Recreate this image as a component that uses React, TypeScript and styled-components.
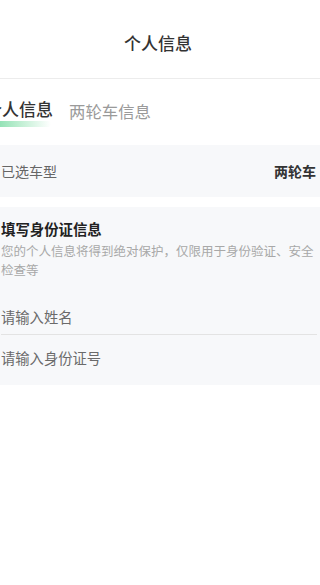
import React from "react";
import styled, { createGlobalStyle } from "styled-components";

const GlobalStyle = createGlobalStyle`
  html, body {
    margin: 0;
    padding: 0;
    background: #ffffff;
    overflow: hidden;
  }
  body {
    font-family: "Noto Sans CJK SC", "Noto Sans", sans-serif;
    color: #333333;
  }
  * { box-sizing: border-box; }
`;

const Page = styled.div`
  width: 320px;
  height: 585px;
  overflow: hidden;
  background: #ffffff;
  display: flex;
  flex-direction: column;
`;

const Header = styled.header`
  height: 79px;
  flex: none;
  display: flex;
  align-items: center;
  justify-content: center;
  padding: 8px 4px 0 0;
  border-bottom: 1px solid #ececec;
`;

const Title = styled.h1`
  margin: 0;
  font-size: 17px;
  line-height: 24px;
  font-weight: 500;
  color: #333333;
`;

const Tabs = styled.nav`
  display: flex;
  align-items: flex-start;
  gap: 16px;
  margin-left: -15px;
  padding-top: 18px;
`;

const Tab = styled.div<{ $active?: boolean }>`
  display: flex;
  flex-direction: column;
  font-size: ${(p) => (p.$active ? "17px" : "16.4px")};
  line-height: 24px;
  font-weight: ${(p) => (p.$active ? 500 : 400)};
  color: ${(p) => (p.$active ? "#333333" : "#9a9a9a")};
  padding-top: ${(p) => (p.$active ? "0" : "2px")};
`;

const TabBar = styled.span`
  display: block;
  height: 6px;
  width: 66px;
  border-radius: 3px;
  background: linear-gradient(
    90deg,
    rgba(70, 205, 130, 0.75) 0%,
    rgba(120, 220, 160, 0.45) 55%,
    rgba(160, 230, 190, 0) 100%
  );
`;

const Card = styled.section`
  background: #f7f8fa;
  padding: 0 3px 0 1px;
`;

const TypeCard = styled(Card)`
  margin-top: 18px;
  height: 52px;
  display: flex;
  align-items: center;
  justify-content: space-between;
  padding: 0 4px 0 1px;
`;

const Label = styled.span`
  font-size: 14px;
  line-height: 20px;
  color: #666666;
`;

const Value = styled.span`
  font-size: 14px;
  line-height: 20px;
  font-weight: 700;
  color: #333333;
`;

const IdCard = styled(Card)`
  margin-top: 10px;
  padding-top: 12px;
  padding-bottom: 1px;
`;

const CardTitle = styled.h2`
  margin: 0;
  font-size: 14.4px;
  line-height: 20px;
  font-weight: 700;
  color: #222222;
`;

const Desc = styled.p`
  margin: 2px 0 0;
  font-size: 12.5px;
  line-height: 19px;
  color: #a8a8a8;
`;

const Field = styled.label<{ $divider?: boolean }>`
  display: flex;
  align-items: center;
  padding: ${(p) => (p.$divider ? "28px 0 7px" : "13px 0 16px")};
  border-bottom: ${(p) => (p.$divider ? "1px solid #e3e3e3" : "none")};
`;

const Input = styled.input`
  width: 100%;
  border: 0;
  outline: 0;
  padding: 0;
  margin: 0;
  background: transparent;
  font-family: "Noto Sans CJK SC", "Noto Sans", sans-serif;
  font-size: 14.3px;
  line-height: 20px;
  height: 20px;
  color: #333333;
  &::placeholder {
    color: #6a6a6a;
    opacity: 1;
  }
`;

export default function App() {
  return (
    <>
      <GlobalStyle />
      <Page>
        <Header>
          <Title>个人信息</Title>
        </Header>
        <Tabs>
          <Tab $active>
            个人信息
            <TabBar />
          </Tab>
          <Tab>两轮车信息</Tab>
        </Tabs>
        <TypeCard>
          <Label>已选车型</Label>
          <Value>两轮车</Value>
        </TypeCard>
        <IdCard>
          <CardTitle>填写身份证信息</CardTitle>
          <Desc>您的个人信息将得到绝对保护，仅限用于身份验证、安全检查等</Desc>
          <Field $divider>
            <Input placeholder="请输入姓名" />
          </Field>
          <Field>
            <Input placeholder="请输入身份证号" />
          </Field>
        </IdCard>
      </Page>
    </>
  );
}
